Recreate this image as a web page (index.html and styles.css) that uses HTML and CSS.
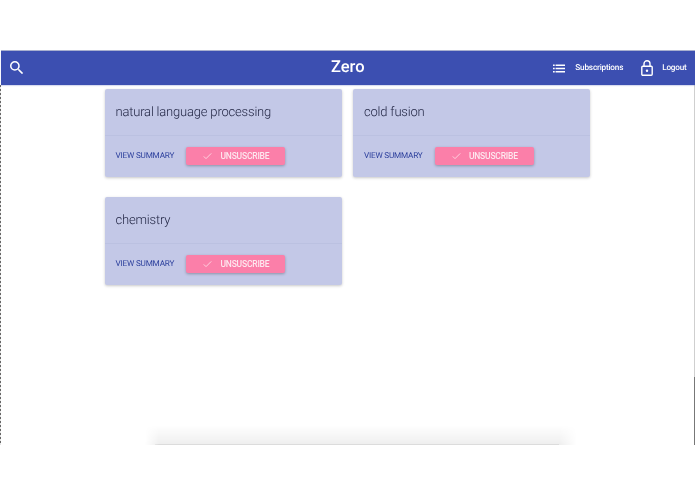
FILE: index.html
```html
<!DOCTYPE html>
<html lang="en">
<head>
<meta charset="utf-8">
<title>Zero</title>
<link rel="stylesheet" href="styles.css">
</head>
<body>
<div class="window">
  <header class="appbar">
    <svg class="icon-search" viewBox="3 3 18 18"><path d="M15.5 14h-.79l-.28-.27A6.470 6.470 0 0 0 16 9.500 6.500 6.500 0 1 0 9.500 16c1.610 0 3.090-.59 4.230-1.570l.27.28v.79l5 4.990L20.490 19l-4.990-5zm-6 0C7.010 14 5 11.990 5 9.500S7.010 5 9.500 5 14 7.010 14 9.500 11.990 14 9.500 14z"/></svg>
    <h1 class="brand">Zero</h1>
    <nav class="nav">
      <a class="nav-item nav-subs"><svg class="icon-list" viewBox="0 0 14 10"><path d="M0 .2h2v1.900H0zM3 .2h11v1.900H3zM0 4.050h2v1.900H0zM3 4.050h11v1.900H3zM0 7.900h2v1.900H0zM3 7.900h11v1.900H3z"/></svg>Subscriptions</a>
      <a class="nav-item nav-logout"><svg class="icon-lock" viewBox="0 0 12 16"><path d="M3 7V3.800a3 3 0 0 1 6 0V7" fill="none" stroke="#fff" stroke-width="1.400"/><rect x=".8" y="6.300" width="10.400" height="8.900" rx="1" fill="none" stroke="#fff" stroke-width="1.400"/><circle cx="6" cy="10.700" r="1.200" fill="#fff"/></svg>Logout</a>
    </nav>
  </header>
  <main class="content">
    <section class="grid">
      <article class="card">
        <h2 class="card-title">natural language processing</h2>
        <div class="card-actions">
          <a class="link">VIEW SUMMARY</a>
          <button class="btn"><svg class="icon-check" viewBox="0 0 12 10"><path d="M1 5.500l3 3L11 1.500" fill="none" stroke="#ffe3ec" stroke-width="1.100"/></svg>UNSUSCRIBE</button>
        </div>
      </article>
      <article class="card">
        <h2 class="card-title">cold fusion</h2>
        <div class="card-actions">
          <a class="link">VIEW SUMMARY</a>
          <button class="btn"><svg class="icon-check" viewBox="0 0 12 10"><path d="M1 5.500l3 3L11 1.500" fill="none" stroke="#ffe3ec" stroke-width="1.100"/></svg>UNSUSCRIBE</button>
        </div>
      </article>
      <article class="card">
        <h2 class="card-title">chemistry</h2>
        <div class="card-actions">
          <a class="link">VIEW SUMMARY</a>
          <button class="btn"><svg class="icon-check" viewBox="0 0 12 10"><path d="M1 5.500l3 3L11 1.500" fill="none" stroke="#ffe3ec" stroke-width="1.100"/></svg>UNSUSCRIBE</button>
        </div>
      </article>
    </section>
    <div class="edge-shadow"></div>
  </main>
</div>
</body>
</html>
```
FILE: styles.css
```css
* { box-sizing: border-box; }
html, body { margin: 0; height: 100%; background: #fff; }
body { font-family: Roboto, sans-serif; overflow: hidden; text-rendering: geometricPrecision; }
.window {
  margin-top: 51px;
  height: 394px;
  display: flex;
  flex-direction: column;
  filter: blur(.35px);
}
.appbar {
  height: 34px;
  flex: none;
  display: flex;
  align-items: center;
  position: relative;
  margin-left: 1px;
  background: #3c4fb1;
  box-shadow: 0 -1px 0 #a9b0cf, 0 1px 1px rgba(60,79,177,.2);
  color: #fff;
  padding-left: 9px;
}
.icon-search { width: 13.500px; height: 13.500px; fill: #fff; margin-top: -1px; }
.brand {
  position: absolute;
  left: 330px;
  top: 0;
  margin: 0;
  font-size: 16.500px;
  line-height: 34px;
  font-weight: 500;
}
.nav { margin-left: auto; display: flex; align-items: center; padding-right: 8.400px; font-size: 8.200px; letter-spacing: -.2px; font-weight: 500; }
.nav-item { display: flex; align-items: center; }
.nav-subs { margin-right: 18px; }
.icon-list { width: 12px; height: 9px; fill: #fff; margin-right: 10px; }
.icon-lock { width: 12px; height: 16px; margin-right: 9px; }
.content {
  flex: 1;
  display: flex;
  flex-direction: column;
  padding: 4px 0 0 105px;
  background:
    repeating-linear-gradient(to bottom, #666 0 2px, #e4e4e4 2px 4px) left top / 1px 100% no-repeat,
    linear-gradient(to bottom, #cfcfcf 0 292px, #777 292px) right top / 1px 100% no-repeat;
}
.grid { display: grid; grid-template-columns: 237px 237px; column-gap: 11.450px; row-gap: 20px; align-content: start; }
.card {
  height: 88px;
  background: #c3c8e7;
  border-radius: 2px;
  box-shadow: 0 1px 3px rgba(0,0,0,.22);
}
.card-title {
  margin: 0;
  height: 47px;
  padding: 15.200px 0 0 10.500px;
  font-size: 13px;
  line-height: 17px;
  font-weight: 300;
  letter-spacing: -.19px;
  color: #1e2240;
  border-bottom: 1px solid #bbc1e1;
}
.card-actions { display: flex; align-items: center; padding: 10.500px 0 0 10.500px; }
.link { font-size: 8.200px; font-weight: 400; letter-spacing: -.2px; color: #2f429e; width: 70.950px; margin-top: 1px; white-space: nowrap; }
.btn {
  width: 99px;
  height: 18.500px;
  border: 0;
  padding: 0 0 0 17px;
  display: flex;
  align-items: center;
  background: #fb7fa9;
  color: #fde8ef;
  border-radius: 2px;
  font-family: inherit;
  font-size: 8.500px;
  letter-spacing: -.2px;
  font-weight: 500;
  box-shadow: 0 1px 3px rgba(0,0,0,.28);
}
.icon-check { width: 9px; height: 8px; margin-right: 8px; }
.edge-shadow {
  margin: auto 0 0 40px;
  width: 432px;
  height: 20px;
  background:
    linear-gradient(#dcdcdc, #dcdcdc) 10px bottom / 404px 1px no-repeat,
    linear-gradient(to bottom, rgba(0,0,0,0), rgba(0,0,0,.065));
  -webkit-mask-image: linear-gradient(to right, transparent, #000 14px, #000 414px, transparent);
  mask-image: linear-gradient(to right, transparent, #000 14px, #000 414px, transparent);
}
```
